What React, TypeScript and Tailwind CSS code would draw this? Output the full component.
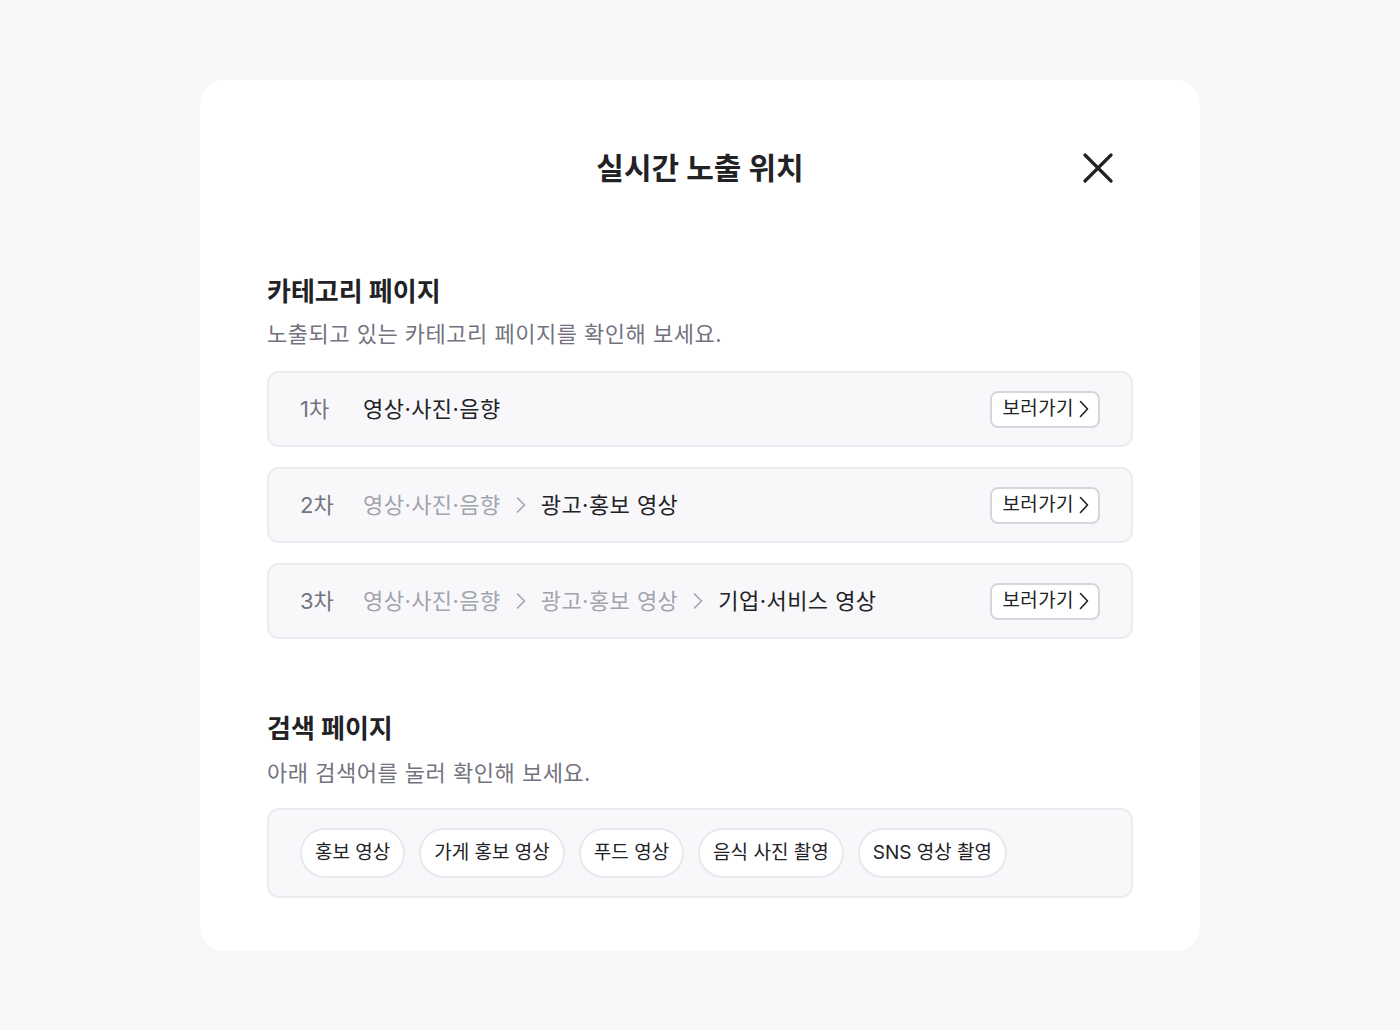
const FONT = { fontFamily: "Inter, 'Noto Sans CJK KR', sans-serif" }

interface CatRow { level: string; path: string[] }

const rows: CatRow[] = [
  { level: '1차', path: ['영상·사진·음향'] },
  { level: '2차', path: ['영상·사진·음향', '광고·홍보 영상'] },
  { level: '3차', path: ['영상·사진·음향', '광고·홍보 영상', '기업·서비스 영상'] },
]

const keywords = ['홍보 영상', '가게 홍보 영상', '푸드 영상', '음식 사진 촬영', 'SNS 영상 촬영']

function Arrow({ className }: { className: string }) {
  return (
    <svg width="12" height="20" viewBox="0 0 12 20" fill="none" className={className}>
      <path d="M2.5 3l7 7-7 7" stroke="currentColor" strokeWidth="1.6" strokeLinecap="round" strokeLinejoin="round" />
    </svg>
  )
}

export default function App() {
  return (
    <div className="min-h-[1030px] w-full bg-[#f7f7f9] pt-[80px]" style={FONT}>
      <div className="mx-auto w-[1000px] rounded-[24px] bg-white px-[67px] pt-[68px] pb-[53px]">
        {/* header */}
        <div className="relative flex h-[40px] items-center justify-center">
          <h1 className="text-[30px] font-bold text-[#222226]">실시간 노출 위치</h1>
          <button className="absolute right-[20px] top-1/2 -translate-y-1/2 text-[#222226]">
            <svg width="30" height="30" viewBox="0 0 30 30" fill="none">
              <path d="M2 2l26 26M28 2L2 28" stroke="currentColor" strokeWidth="3.2" strokeLinecap="round" />
            </svg>
          </button>
        </div>

        {/* category */}
        <h2 className="mt-[86px] text-[26px] leading-[36px] font-bold text-[#222226]">카테고리 페이지</h2>
        <p className="mt-[8px] text-[22px] leading-[32px] text-[#73737f] tracking-[0.5px]">노출되고 있는 카테고리 페이지를 확인해 보세요.</p>

        <div className="mt-[21px] flex flex-col gap-[20px]">
          {rows.map(r => (
            <div key={r.level} className="flex h-[76px] items-center rounded-[12px] border-2 border-[#ebebf0] bg-[#f8f8fb] pl-[31px] pr-[31px]">
              <span className="w-[63px] text-[22px] text-[#73737f]">{r.level}</span>
              <div className="flex flex-1 items-center gap-[14px]">
                {r.path.map((p, i) => {
                  const last = i === r.path.length - 1
                  return (
                    <div key={p} className="flex items-center gap-[14px]">
                      <span className={`text-[22px] tracking-[0.45px] ${last ? 'text-[#222226]' : 'text-[#a3a3ad]'}`}>{p}</span>
                      {!last && <Arrow className="text-[#a3a3ad]" />}
                    </div>
                  )
                })}
              </div>
              <button className="flex h-[37px] items-center gap-[5px] rounded-[8px] border-2 border-[#d6d6dc] bg-white pl-[10px] pr-[9px] text-[19px] tracking-[0.4px] text-[#222226]">
                보러가기
                <svg width="10" height="18" viewBox="0 0 10 18" fill="none">
                  <path d="M1.5 1.5L8.5 9l-7 7.5" stroke="currentColor" strokeWidth="1.6" strokeLinecap="round" strokeLinejoin="round" />
                </svg>
              </button>
            </div>
          ))}
        </div>

        {/* search */}
        <h2 className="mt-[72px] text-[26px] leading-[36px] font-bold text-[#222226]">검색 페이지</h2>
        <p className="mt-[10px] text-[22px] leading-[32px] text-[#73737f] tracking-[0.5px]">아래 검색어를 눌러 확인해 보세요.</p>

        <div className="mt-[19px] flex h-[90px] items-center gap-[14px] rounded-[12px] border-2 border-[#ebebf0] bg-[#f8f8fb] px-[31px]">
          {keywords.map(k => (
            <button key={k} className="flex h-[50px] items-center rounded-full border-2 border-[#e8e8ee] bg-white px-[13px] text-[19px] text-[#222226]">
              {k}
            </button>
          ))}
        </div>
      </div>
    </div>
  )
}
